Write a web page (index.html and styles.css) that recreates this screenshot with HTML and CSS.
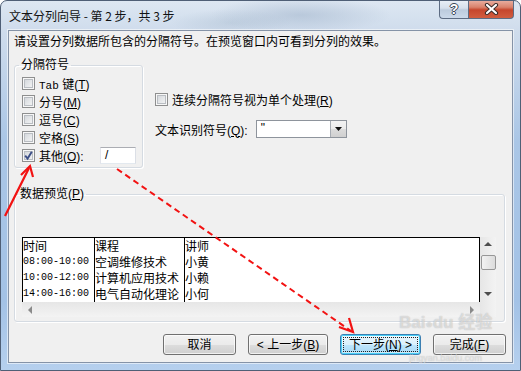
FILE: index.html
```html
<!DOCTYPE html>
<html lang="zh-CN">
<head>
    <meta charset="UTF-8">
    <title>文本分列向导</title>
    <link rel="stylesheet" href="styles.css">
</head>
<body>

    <div class="window">
        <div class="titlebar">
            <span class="title">文本分列向导 - 第 2 步，共 3 步</span>
            <div class="caption">
                <div class="cap help">?</div>
                <div class="cap close">
                    <svg width="15" height="12" viewBox="0 0 15 12">
                        <path d="M3 2 L12 10 M12 2 L3 10" stroke="#3b2d2b" stroke-width="4.2" stroke-linecap="round"/>
                        <path d="M3 2 L12 10 M12 2 L3 10" stroke="#fff" stroke-width="2.2" stroke-linecap="round"/>
                    </svg>
                </div>
            </div>
        </div>

        <div class="client">
            <p class="intro">请设置分列数据所包含的分隔符号。在预览窗口内可看到分列的效果。</p>

            <div class="options">
                <fieldset class="group delims">
                    <legend>分隔符号</legend>
                    <div class="check"><span class="box"></span><span><span class="mono">Tab</span> 键(<u>T</u>)</span></div>
                    <div class="check"><span class="box"></span><span>分号(<u>M</u>)</span></div>
                    <div class="check"><span class="box"></span><span>逗号(<u>C</u>)</span></div>
                    <div class="check"><span class="box"></span><span>空格(<u>S</u>)</span></div>
                    <div class="check">
                        <span class="box">
                            <svg width="11" height="11" viewBox="0 0 11 11">
                                <path d="M2.2 5.6 L4.6 8.6 L8.8 1.8" fill="none" stroke="#3d4f86" stroke-width="1.9"/>
                            </svg>
                        </span>
                        <span>其他(<u>O</u>):</span>
                        <span class="field">/</span>
                    </div>
                </fieldset>

                <div class="side">
                    <div class="check"><span class="box"></span><span>连续分隔符号视为单个处理(<u>R</u>)</span></div>
                    <div class="qualifier">
                        <span>文本识别符号(<u>Q</u>):</span>
                        <div class="combo">
                            <span class="combo-text">"</span>
                            <span class="drop">
                                <svg width="7" height="4" viewBox="0 0 7 4"><path d="M0 0 H7 L3.5 4 Z" fill="#111"/></svg>
                            </span>
                        </div>
                    </div>
                </div>
            </div>

            <fieldset class="group preview">
                <legend>数据预览(<u>P</u>)</legend>
                <div class="listbox">
                    <div class="data">
                        <div class="col c1">
                            <div>时间</div>
                            <div class="mono">08:00-10:00</div>
                            <div class="mono">10:00-12:00</div>
                            <div class="mono">14:00-16:00</div>
                        </div>
                        <div class="col c2">
                            <div>课程</div>
                            <div>空调维修技术</div>
                            <div>计算机应用技术</div>
                            <div>电气自动化理论</div>
                        </div>
                        <div class="col c3">
                            <div>讲师</div>
                            <div>小黄</div>
                            <div>小赖</div>
                            <div>小何</div>
                        </div>
                    </div>
                    <div class="vscroll">
                        <span class="arrow up"></span>
                        <span class="thumb"></span>
                        <span class="arrow down"></span>
                    </div>
                    <div class="hscroll">
                        <span class="arrow left"></span>
                        <span class="arrow right"></span>
                    </div>
                    <div class="corner"></div>
                </div>
            </fieldset>

            <div class="buttons">
                <div class="btn w73">取消</div>
                <div class="btn w80">&lt; 上一步(<u>B</u>)</div>
                <div class="btn w81 default"><span class="focus">下一步(<u>N</u>) &gt;</span></div>
                <div class="btn w73">完成(<u>F</u>)</div>
            </div>
        </div>

        <div class="watermark">
            <span class="wm-logo">Bai<span class="paw">&#9679;</span>du 经验</span>
            <span class="wm-url">jingyan.baidu.com</span>
        </div>

        <svg class="marks" width="521" height="371" viewBox="0 0 521 371">
            <path d="M5 216 L29 168" stroke="#f21212" stroke-width="2.2" fill="none"/>
            <path d="M21 175 L30 166 L33 177" stroke="#f21212" stroke-width="2.2" fill="none"/>
            <path d="M117 169 L351 331" stroke="#f21212" stroke-width="2" stroke-dasharray="6 4" fill="none"/>
            <path d="M339 327 L353 332 L349 318" stroke="#f21212" stroke-width="2.2" fill="none"/>
        </svg>
    </div>
</body>
</html>
```

FILE: styles.css
```css
body {
    margin: 0;
    font: 12px "Liberation Sans", "Noto Sans CJK SC", sans-serif;
    color: #000;
}

.window {
    position: relative;
    width: 521px;
    height: 371px;
    box-sizing: border-box;
    border: 1px solid #4f5f76;
    border-radius: 7px 7px 0 0;
    background:
        radial-gradient(ellipse 90px 18px at 300px 14px, rgba(150, 170, 195, 0.45), transparent),
        radial-gradient(ellipse 60px 14px at 230px 22px, rgba(160, 180, 200, 0.35), transparent),
        linear-gradient(180deg, #dde7f2 0px, #cfdcec 30px, #aac6e6 140px, #a3c2e6 300px, #b6d0ee 370px);
    overflow: hidden;
}

.titlebar {
    height: 29px;
    display: flex;
    align-items: flex-start;
}
.title {
    padding: 7px 0 0 8px;
    line-height: 16px;
    font-family: "Noto Sans CJK SC", sans-serif;
    color: #111;
}
.caption {
    margin: -1px 6px 0 auto;
    display: flex;
}
.cap {
    height: 19px;
    box-sizing: border-box;
    border: 1px solid #5d6c83;
    border-top: none;
    display: flex;
    align-items: center;
    justify-content: center;
}
.help {
    width: 29px;
    border-right: none;
    border-radius: 0 0 0 4px;
    background: linear-gradient(180deg, #eaf0f7 0%, #d6e0ec 45%, #bccbdd 55%, #cbd9ea 100%);
    font: bold 14px "Liberation Sans", sans-serif;
    color: #fff;
    text-shadow: 1px 0 0 #3a4656, -1px 0 0 #3a4656, 0 1px 0 #3a4656, 0 -1px 0 #3a4656;
}
.close {
    width: 46px;
    border-radius: 0 0 4px 0;
    background: linear-gradient(180deg, #eab2a5 0%, #d9826c 40%, #c6462d 55%, #d15d3f 100%);
}

.client {
    margin: 0 7px;
    width: 505px;
    height: 333px;
    box-sizing: border-box;
    border: 1px solid #8593a7;
    background: #f0f0f0;
    box-shadow: 0 0 0 1px rgba(255, 255, 255, 0.55);
}

.intro {
    margin: 4px 0 0 5px;
    line-height: 14px;
}

.options {
    display: flex;
    align-items: flex-start;
    margin-top: 9px;
}

.group {
    margin: 0;
    border: 1px solid #d5dbe2;
    border-radius: 3px;
    box-shadow: 1px 1px 0 #fff, inset 1px 1px 0 #fff;
}
.group legend {
    padding: 0 2px;
    line-height: 14px;
}

.delims {
    margin-left: 5px;
    width: 129px;
    height: 110px;
    box-sizing: border-box;
    padding: 2px 6px 0 7px;
}
.delims legend {
    margin-left: -3px;
}

.check {
    height: 18px;
    display: flex;
    align-items: center;
    gap: 4px;
}
.box {
    width: 13px;
    height: 13px;
    box-sizing: border-box;
    border: 1px solid #8e8f8f;
    background: linear-gradient(135deg, #cdd1d6 0%, #e6e8ea 55%, #f8f8f8 100%);
    box-shadow: inset 0 0 0 1px #f7f7f7, inset 0 0 0 2px #b9bdc2;
    display: flex;
    align-items: center;
    justify-content: center;
}
.mono {
    font-family: "Liberation Mono", monospace;
    font-size: 11px;
}
.field {
    margin-left: auto;
    width: 36px;
    height: 17px;
    box-sizing: border-box;
    border: 1px solid #abadb3;
    border-color: #abadb3 #dbdfe6 #e3e9ef #e2e3ea;
    background: #fff;
    padding-left: 4px;
    line-height: 15px;
}

.side {
    margin: 32px 0 0 12px;
    display: flex;
    flex-direction: column;
    gap: 12px;
}
.qualifier {
    display: flex;
    align-items: center;
    gap: 8px;
    height: 18px;
}
.combo {
    width: 91px;
    height: 18px;
    box-sizing: border-box;
    border: 1px solid #8e949c;
    background: #fff;
    display: flex;
}
.combo-text {
    flex: 1;
    padding-left: 4px;
    line-height: 15px;
}
.drop {
    width: 15px;
    border-left: 1px solid #a7acb3;
    background: linear-gradient(180deg, #f3f3f3 0%, #ebebeb 50%, #dcdcdc 50%, #d0d0d0 100%);
    display: flex;
    align-items: center;
    justify-content: center;
}

.preview {
    margin: 19px 0 0 5px;
    width: 491px;
    height: 135px;
    box-sizing: border-box;
    padding: 36px 7px 3px 7px;
}
.preview legend {
    margin-left: -4px;
}

.listbox {
    width: 474px;
    height: 80px;
    display: grid;
    grid-template-columns: 1fr 16px;
    grid-template-rows: 1fr 15px;
}
.data {
    background: #fff;
    border: 1px solid #000;
    border-bottom: none;
    display: flex;
    overflow: hidden;
    font-family: "Noto Sans CJK SC", sans-serif;
    line-height: 16px;
}
.col {
    border-right: 1px solid #000;
    white-space: nowrap;
}
.col .mono {
    font-size: 10px;
}
.c1 { width: 71px; }
.c2 { width: 89px; }
.c3 { flex: 1; border-right: none; }

.vscroll,
.corner {
    background: linear-gradient(90deg, #e6e6e6, #f3f3f3);
}
.hscroll {
    background: linear-gradient(180deg, #e6e6e6, #f3f3f3);
}
.vscroll {
    display: flex;
    flex-direction: column;
    align-items: center;
}
.hscroll {
    display: flex;
    align-items: center;
    justify-content: space-between;
    padding: 0 6px;
}
.arrow {
    width: 0;
    height: 0;
    border: 4px solid transparent;
}
.arrow.up {
    margin-top: 5px;
    border-bottom: 4px solid #4d4d4d;
    border-top-width: 0;
}
.arrow.down {
    margin-top: auto;
    margin-bottom: 6px;
    border-top: 4px solid #4d4d4d;
    border-bottom-width: 0;
}
.arrow.left {
    border-right: 4px solid #8a8a8a;
    border-left-width: 0;
}
.arrow.right {
    border-left: 4px solid #8a8a8a;
    border-right-width: 0;
}
.thumb {
    margin-top: 9px;
    width: 15px;
    height: 15px;
    box-sizing: border-box;
    border: 1px solid #979797;
    border-radius: 2px;
    background: linear-gradient(90deg, #f2f2f2, #dcdcdc);
}

.buttons {
    margin: 12px 6px 0 0;
    display: flex;
    justify-content: flex-end;
    gap: 12px;
}
.btn {
    height: 21px;
    box-sizing: border-box;
    border: 1px solid #707070;
    border-radius: 3px;
    background: linear-gradient(180deg, #f2f2f2 0%, #ebebeb 50%, #dddddd 51%, #cfcfcf 100%);
    box-shadow: inset 0 0 0 1px rgba(255, 255, 255, 0.7);
    display: flex;
    align-items: center;
    justify-content: center;
    line-height: 14px;
}
.w73 { width: 73px; }
.w80 { width: 80px; }
.w81 { width: 81px; }
.btn.default {
    border-color: #3c7fb1;
    box-shadow: inset 0 0 0 1px #48d0f8, inset 0 0 0 2px rgba(255, 255, 255, 0.4);
    background: linear-gradient(180deg, #eaf6fd 0%, #d9f0fc 50%, #bee6fd 51%, #a7d9f5 100%);
    padding: 2px;
    align-items: stretch;
}
.focus {
    flex: 1;
    border: 1px dotted #222;
    display: flex;
    align-items: center;
    justify-content: center;
}

.watermark {
    position: absolute;
    left: 398px;
    top: 313px;
    display: flex;
    flex-direction: column;
    align-items: center;
    color: rgba(255, 255, 255, 0.5);
    text-shadow: 0 0 1px rgba(120, 120, 120, 0.55);
    pointer-events: none;
}
.wm-logo {
    font: bold 17px "Liberation Sans", "Noto Sans CJK SC", sans-serif;
    line-height: 18px;
}
.paw {
    font-size: 12px;
}
.wm-url {
    font: 9px "Liberation Sans", sans-serif;
    margin-top: 20px;
}

.marks {
    position: absolute;
    left: -1px;
    top: -1px;
    pointer-events: none;
}
```
